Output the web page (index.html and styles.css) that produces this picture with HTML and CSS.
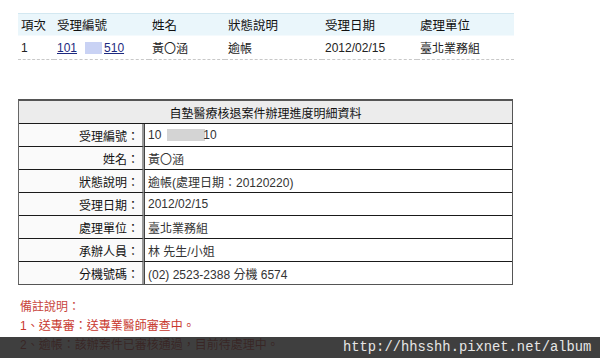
FILE: index.html
```html
<!DOCTYPE html>
<html lang="zh-Hant">
<head>
<meta charset="utf-8">
<link rel="stylesheet" href="styles.css">
</head>
<body>
<div class="page">
  <table class="list">
    <thead>
      <tr>
        <th class="c1">項次</th>
        <th class="c2">受理編號</th>
        <th class="c3">姓名</th>
        <th class="c4">狀態說明</th>
        <th class="c5">受理日期</th>
        <th class="c6">處理單位</th>
      </tr>
    </thead>
    <tbody>
      <tr>
        <td>1</td>
        <td><a class="link" href="#">101<span class="mask-blue"></span>510</a></td>
        <td>黃〇涵</td>
        <td>逾帳</td>
        <td>2012/02/15</td>
        <td>臺北業務組</td>
      </tr>
    </tbody>
  </table>

  <table class="detail">
    <tr><th class="title" colspan="2">自墊醫療核退案件辦理進度明細資料</th></tr>
    <tr><td class="lbl">受理編號：</td><td class="val">10<span class="mask-gray"></span>10</td></tr>
    <tr><td class="lbl">姓名：</td><td class="val">黃〇涵</td></tr>
    <tr><td class="lbl">狀態說明：</td><td class="val">逾帳(處理日期：20120220)</td></tr>
    <tr><td class="lbl">受理日期：</td><td class="val">2012/02/15</td></tr>
    <tr><td class="lbl">處理單位：</td><td class="val">臺北業務組</td></tr>
    <tr><td class="lbl">承辦人員：</td><td class="val">林 先生/小姐</td></tr>
    <tr><td class="lbl">分機號碼：</td><td class="val">(02) 2523-2388 分機 6574</td></tr>
  </table>

  <div class="notes">
    <p class="note-title">備註說明：</p>
    <p class="note">1、送專審：送專業醫師審查中。</p>
    <p class="note">2、逾帳：該辦案件已審核通過，目前待處理中。</p>
  </div>
</div>
<div class="watermark"><span class="wm-text">http://hhsshh.pixnet.net/album</span></div>
</body>
</html>
```
FILE: styles.css
```css
html, body {
  margin: 0;
  padding: 0;
  background: #fff;
  overflow: hidden;
}
body {
  width: 600px;
  height: 358px;
  position: relative;
  font-family: "Liberation Sans", Arial, "Noto Sans CJK TC", sans-serif;
  font-size: 12px;
  color: #222;
}
.page {
  padding: 13px 0 0 18px;
}
.list {
  border-collapse: collapse;
  width: 496px;
  table-layout: fixed;
}
.list th {
  background: #eaf6fb;
  border-top: 1px solid #d3e8f1;
  border-bottom: 1px solid #f4fafd;
  font-weight: normal;
  text-align: left;
  height: 21px;
  padding: 0 0 0 3px;
  color: #111;
  font-size: 12.5px;
}
.list .c1 { width: 33px; }
.list .c2 { width: 92px; }
.list .c3 { width: 73px; }
.list .c4 { width: 94px; }
.list .c5 { width: 92px; }
.list td {
  height: 23px;
  padding: 0 0 0 3px;
  border-bottom: 1px dashed #c8c8c8;
  color: #222;
}
.link {
  color: #1d2a80;
  text-decoration: underline;
}
.mask-blue {
  display: inline-block;
  width: 17px;
  height: 12px;
  margin: 0 2px 0 8px;
  vertical-align: -2px;
  background: #c9d2f4;
}
.detail {
  margin-top: 39px;
  width: 495px;
  border-collapse: separate;
  border-spacing: 0;
  border: 1px solid #555;
  border-top-width: 2px;
  border-left-color: #666;
}
.detail th.title {
  background: #ececec;
  font-weight: normal;
  height: 22px;
  padding: 0;
  text-align: center;
  color: #111;
  border-bottom: 1px solid #1a1a1a;
}
.detail td {
  height: 22px;
  padding: 0;
  border-bottom: 1px solid #1a1a1a;
}
.detail tr:last-child td {
  border-bottom: none;
}
.detail .lbl {
  width: 120px;
  text-align: right;
  padding-right: 3px;
  color: #111;
  background: #fafafa;
  border-right: 2px solid #999;
}
.detail .val {
  padding-left: 3px;
  color: #333;
  border-left: 1px solid #444;
}
.mask-gray {
  display: inline-block;
  width: 38px;
  height: 12px;
  margin: 0 -2px 0 6px;
  vertical-align: -2px;
  background: #d4d4d4;
}
.notes {
  margin-top: 13px;
  padding-left: 2px;
}
.notes p {
  margin: 0;
  line-height: 19px;
  color: #c8372d;
}
.notes .note-title {
  color: #c8463c;
}
.watermark {
  position: absolute;
  left: 0;
  right: 0;
  top: 337px;
  bottom: 0;
  background: rgba(36, 36, 36, 0.88);
}
.wm-text {
  position: absolute;
  left: 343px;
  top: 2px;
  font-family: "Liberation Mono", "Courier New", monospace;
  font-size: 13.8px;
  color: #e6e6e6;
  line-height: 18px;
}
```
